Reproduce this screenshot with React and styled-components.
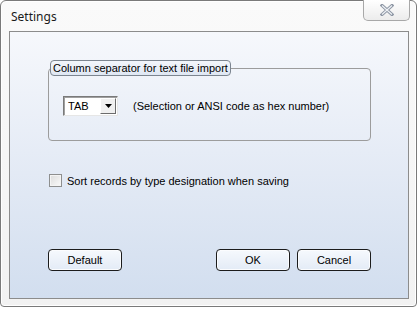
import React from "react";
import styled, { createGlobalStyle } from "styled-components";

const Global = createGlobalStyle`
  html, body { margin: 0; padding: 0; background: #ffffff; }
  body { font-family: Tahoma, "Liberation Sans", Arial, sans-serif; font-size: 11px; color: #000; }
  * { box-sizing: border-box; }
`;

const Window = styled.div`
  width: 417px;
  height: 307px;
  border: 1px solid #7a7a7a;
  border-radius: 6px 6px 4px 4px;
  background: linear-gradient(#fafafa, #f2f2f2);
  box-shadow: inset 0 0 0 1px #ffffff;
  display: flex;
  flex-direction: column;
  padding: 0 7px 7px 8px;
`;

const TitleBar = styled.div`
  height: 30px;
  display: flex;
  align-items: flex-start;
  justify-content: space-between;
`;

const Title = styled.div`
  font-family: "Noto Sans", "Open Sans", sans-serif;
  font-size: 12px;
  padding: 7px 0 0 2px;
  color: #1a1a1a;
`;

const CloseButton = styled.div`
  width: 47px;
  height: 21px;
  margin-top: -1px;
  margin-right: -1px;
  border: 1px solid #a8a8a8;
  border-top: none;
  border-radius: 0 0 5px 5px;
  background: linear-gradient(#ffffff, #ececec);
  display: flex;
  align-items: center;
  justify-content: center;
`;

const Client = styled.div`
  flex: 1;
  border: 1px solid #8c8c8c;
  background: linear-gradient(#f6f8fc 0%, #e6ecf6 45%, #d2deef 100%);
  display: flex;
  flex-direction: column;
  padding: 28px 37px 27px 38px;
`;

const Group = styled.fieldset`
  margin: 0;
  height: 81px;
  border: 1px solid #9c9c9c;
  border-radius: 4px;
  padding: 8px 14px 0 14px;
`;

const Legend = styled.legend`
  margin-left: -13px;
  padding: 1px 2px 1px 2px;
  border: 1px solid #7c8590;
  border-radius: 4px;
  background: linear-gradient(#f3f6fb, #dfe7f3);
  line-height: 12px;
  font-size: 11px;
  color: #000;
`;

const Row = styled.div`
  display: flex;
  align-items: center;
  gap: 15px;
  margin-top: 12px;
`;

const Select = styled.div`
  width: 55px;
  height: 20px;
  border: 1px solid #7a7a7a;
  border-right-color: #e6e6e6;
  border-bottom-color: #e6e6e6;
  box-shadow: inset 1px 1px 0 #a0a0a0;
  background: #fff;
  display: flex;
  align-items: center;
  padding: 0 1px 0 4px;
`;

const SelectValue = styled.span`
  flex: 1;
`;

const DropButton = styled.div`
  width: 16px;
  height: 16px;
  background: #f0f0f0;
  border: 1px solid;
  border-color: #ffffff #6c6c6c #6c6c6c #ffffff;
  display: flex;
  align-items: center;
  justify-content: center;
`;

const Hint = styled.span`
  color: #000;
`;

const CheckRow = styled.label`
  display: flex;
  align-items: center;
  gap: 5px;
  margin-top: 33px;
  margin-left: 1px;
`;

const CheckBox = styled.span`
  width: 13px;
  height: 13px;
  border: 1px solid #8e8f8f;
  background: linear-gradient(135deg, #dcdcdc, #fafafa);
  box-shadow: inset 0 0 0 1px #f4f4f4;
`;

const Spacer = styled.div`
  flex: 1;
`;

const Buttons = styled.div`
  display: flex;
  align-items: center;
`;

const Button = styled.div`
  width: 74px;
  height: 22px;
  border: 1px solid #1c1c1c;
  border-radius: 4px;
  background: linear-gradient(#f6f9fd, #e3ebf6);
  box-shadow: inset 0 0 0 1px #fbfcfe;
  display: flex;
  align-items: center;
  justify-content: center;
  margin-left: ${(p) => p.$gap || 0}px;
`;

export default function App() {
  return (
    <>
      <Global />
      <Window>
        <TitleBar>
          <Title>Settings</Title>
          <CloseButton>
            <svg width="14" height="12" viewBox="0 0 14 12">
              <path d="M2 1.5 L12 10.5 M12 1.5 L2 10.5" stroke="#8d96a4" strokeWidth="3.2" strokeLinecap="square" fill="none" />
              <path d="M2 1.5 L12 10.5 M12 1.5 L2 10.5" stroke="#eef1f5" strokeWidth="1.2" fill="none" />
            </svg>
          </CloseButton>
        </TitleBar>
        <Client>
          <Group>
            <Legend>Column separator for text file import</Legend>
            <Row>
              <Select>
                <SelectValue>TAB</SelectValue>
                <DropButton>
                  <svg width="7" height="4" viewBox="0 0 7 4">
                    <path d="M0 0 H7 L3.5 4 Z" fill="#000" />
                  </svg>
                </DropButton>
              </Select>
              <Hint>(Selection or ANSI code as hex number)</Hint>
            </Row>
          </Group>
          <CheckRow>
            <CheckBox />
            <span>Sort records by type designation when saving</span>
          </CheckRow>
          <Spacer />
          <Buttons>
            <Button>Default</Button>
            <Button $gap={94}>OK</Button>
            <Button $gap={7}>Cancel</Button>
          </Buttons>
        </Client>
      </Window>
    </>
  );
}
